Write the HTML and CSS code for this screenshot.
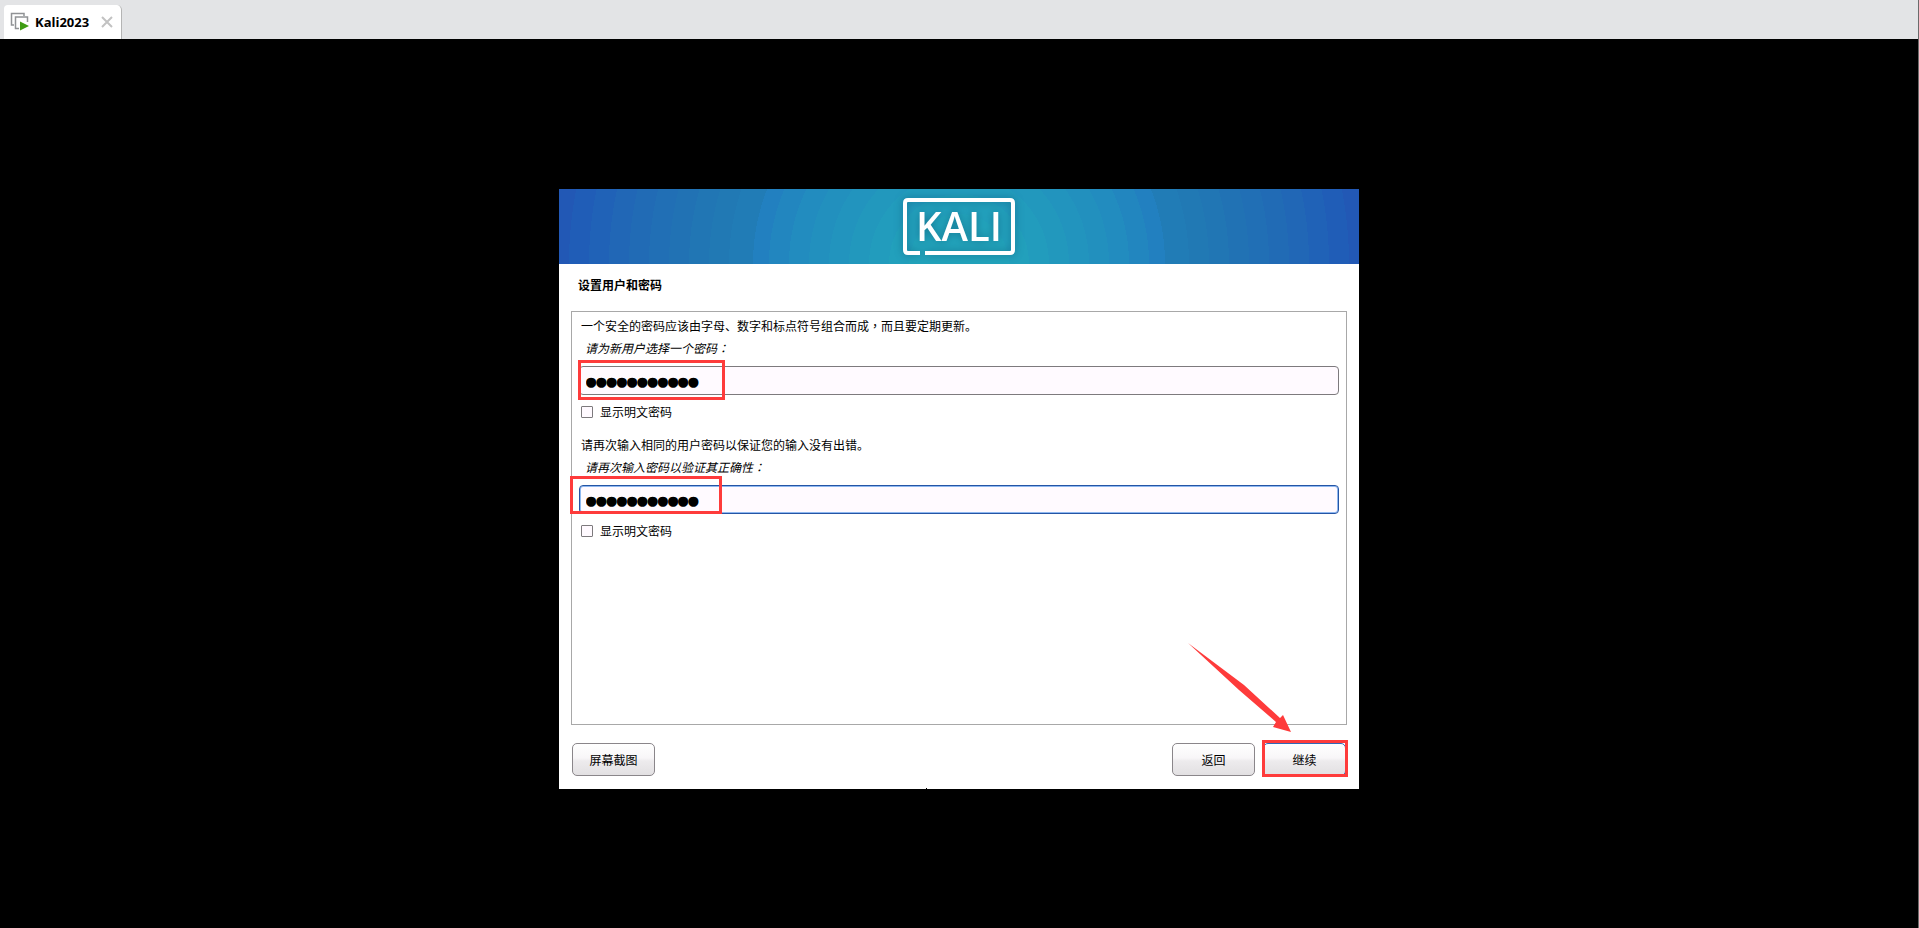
FILE: index.html
```html
<!DOCTYPE html>
<html lang="zh-CN">
<head>
  <meta charset="UTF-8" />
  <meta name="viewport" content="width=device-width, initial-scale=1.0"/>
  <title>Kali2023</title>
  <link rel="stylesheet" href="styles.css">
</head>
<body>
  <header class="tab-bar">
    <div class="tab">
      <svg class="tab-icon" width="20" height="20" viewBox="0 0 20 20" fill="none">
        <path d="M4 13H1.5V1.500H14V4" stroke="#909295" stroke-width="1.500"/>
        <path d="M9 16.500H5.500V5H17.500V10" stroke="#909295" stroke-width="1.500"/>
        <path d="M10 9.500L19 14L10 18.500Z" fill="#3f9c14"/>
      </svg>
      <span class="tab-name">Kali2023</span>
      <button class="tab-close" aria-label="Close">
        <svg width="12" height="12" viewBox="0 0 12 12">
          <path d="M1 1L11 11M11 1L1 11" stroke="#c2c2c2" stroke-width="2"/>
        </svg>
      </button>
    </div>
  </header>

  <main class="screen">
    <div class="installer">
      <div class="banner">
        <svg class="logo" width="112" height="58" viewBox="0 0 112 58">
          <path d="M17 55H5Q2 55 2 52V5Q2 2 5 2H107Q110 2 110 5V52Q110 55 107 55H22" fill="none" stroke="#fff" stroke-width="4"/>
          <text class="logo-text" x="56" y="43" text-anchor="middle">KALI</text>
        </svg>
      </div>

      <h1>设置用户和密码</h1>

      <form class="form">
        <div class="panel">
          <div class="question">
            <p>一个安全的密码应该由字母、数字和标点符号组合而成<span class="mid" lang="zh-TW">，</span>而且要定期更新。</p>
            <label class="prompt" for="password">请为新用户选择一个密码<span class="mid" lang="zh-TW">：</span></label>
            <div class="field">
              <input class="password" id="password" type="text" value="●●●●●●●●●●●">
              <span class="mark mark-first"></span>
            </div>
            <label class="show"><input type="checkbox">显示明文密码</label>
          </div>

          <div class="question">
            <p>请再次输入相同的用户密码以保证您的输入没有出错。</p>
            <label class="prompt" for="password-again">请再次输入密码以验证其正确性<span class="mid" lang="zh-TW">：</span></label>
            <div class="field">
              <input class="password current" id="password-again" type="text" value="●●●●●●●●●●●">
              <span class="mark mark-second"></span>
            </div>
            <label class="show"><input type="checkbox">显示明文密码</label>
          </div>
        </div>

        <div class="buttons">
          <button type="button">屏幕截图</button>
          <button type="button" class="back">返回</button>
          <div class="next">
            <button type="button" class="default">继续</button>
            <span class="mark mark-next"></span>
            <svg class="arrow" width="104" height="90" viewBox="0 0 104 90">
              <path d="M0 0L56 42L92 75L95 72L103 89L85 84L88 79L51 47Z" fill="#fe3b3b"/>
            </svg>
          </div>
        </div>
      </form>
      <span class="pointer"></span>
    </div>
  </main>
</body>
</html>
```
FILE: styles.css
```css
* {
  margin: 0;
  padding: 0;
  box-sizing: border-box;
}

body {
  background: #000;
  color: #000;
  min-height: 100vh;
  display: flex;
  flex-direction: column;
  font: 12px/16px 'Noto Sans CJK SC', sans-serif;
  border-right: 1px solid #6b6b6b;
}

.tab-bar {
  height: 39px;
  padding: 5px 4px 0;
  display: flex;
  background: #e3e4e6;
}

.tab {
  display: flex;
  align-items: center;
  padding: 0 8px 0 6px;
  background: #fff;
  border-right: 1px solid #b4b4b4;
  border-radius: 4px 5px 0 0;
}

.tab-name {
  margin-left: 5px;
  font: bold 13px/16px 'Open Sans', sans-serif;
}

.tab-close {
  display: flex;
  margin-left: 12px;
  background: none;
  border: none;
}

.screen {
  flex: 1;
  display: flex;
  justify-content: center;
  align-items: center;
  padding-top: 11px;
}

.installer {
  position: relative;
  display: flex;
  flex-direction: column;
  width: 100%;
  max-width: 800px;
  min-height: 600px;
  background: #fff;
}

.banner {
  display: flex;
  justify-content: center;
  padding: 9px 0 8px;
  background: radial-gradient(circle at 50% 100%,
    #22a3bb 50px, #22a0bc 50px 70px, #229cbd 70px 90px, #2298bd 90px 110px,
    #2294be 110px 130px, #2290be 130px 150px, #228cbf 150px 170px, #2286bf 170px 190px,
    #2280c0 190px 206px, #217cb6 206px 230px, #2179b4 230px 250px, #2176b4 250px 270px,
    #2172b4 270px 290px, #216fb5 290px 310px, #216bb5 310px 330px, #2167b6 330px 350px,
    #2062b7 350px 370px, #205db7 370px 390px, #2258b5 390px);
}

.logo {
  filter: drop-shadow(0 0 4px rgba(0, 50, 80, 0.4));
}

.logo-text {
  font: 600 40px 'Open Sans', sans-serif;
  fill: #fff;
}

h1 {
  padding: 12px 19px;
  font-size: 12px;
  line-height: 18px;
}

.form {
  flex: 1;
  display: flex;
  flex-direction: column;
  padding: 5px 12px 13px;
}

.panel {
  flex: 1;
  display: flex;
  flex-direction: column;
  gap: 17px;
  padding: 6px 7px;
  border: 1px solid #a8a8a8;
}

.question {
  display: flex;
  flex-direction: column;
}

.question p {
  padding-left: 2px;
}

.prompt {
  padding: 6px 6px 10px;
  font-style: italic;
}

/* full-width punctuation centred in its cell */
.mid {
  font-family: 'Noto Sans CJK TC', sans-serif;
}

.field {
  position: relative;
  display: flex;
}

.password {
  flex: 1;
  height: 29px;
  padding: 0 6px;
  background: #fffaff;
  border: 1px solid #7d7a7d;
  border-radius: 4px;
  outline: none;
  color: #000;
  font: 17px/27px 'DejaVu Sans Mono', monospace;
}

.password.current {
  border-color: #2555a5;
  box-shadow: inset 0 0 0 1px #8fb8f0;
}

.show {
  display: flex;
  align-items: center;
  gap: 7px;
  padding: 9px 2px 0;
}

.show input {
  appearance: none;
  width: 12px;
  height: 12px;
  background: #fffaff;
  border: 1px solid #7d7a7d;
  border-radius: 1px;
}

.buttons {
  display: flex;
  gap: 8px;
  padding: 18px 1px 0;
}

.buttons button {
  width: 83px;
  height: 33px;
  background: linear-gradient(#fff, #f8f6f8 45%, #edebed 55%, #e2e0e2);
  border: 1px solid #8a868a;
  border-radius: 5px;
  color: #000;
  font: 12px/16px 'Noto Sans CJK SC', sans-serif;
}

.buttons .back {
  margin-left: auto;
}

.buttons .default {
  border-color: #2f68b8;
}

.next {
  position: relative;
}

/* red annotations drawn over the form */
.mark {
  position: absolute;
  border: 3px solid #fe3b3b;
  pointer-events: none;
}

.mark-first {
  left: -1px;
  top: -6px;
  width: 147px;
  height: 40px;
}

.mark-second {
  left: -9px;
  top: -9px;
  width: 152px;
  height: 38px;
}

.mark-next {
  inset: -3px -2px -1px -1px;
}

.arrow {
  position: absolute;
  right: 54px;
  bottom: 43px;
  pointer-events: none;
}

.pointer {
  position: absolute;
  left: 367px;
  bottom: 0;
  width: 1px;
  height: 1px;
  background: #000;
}
```
